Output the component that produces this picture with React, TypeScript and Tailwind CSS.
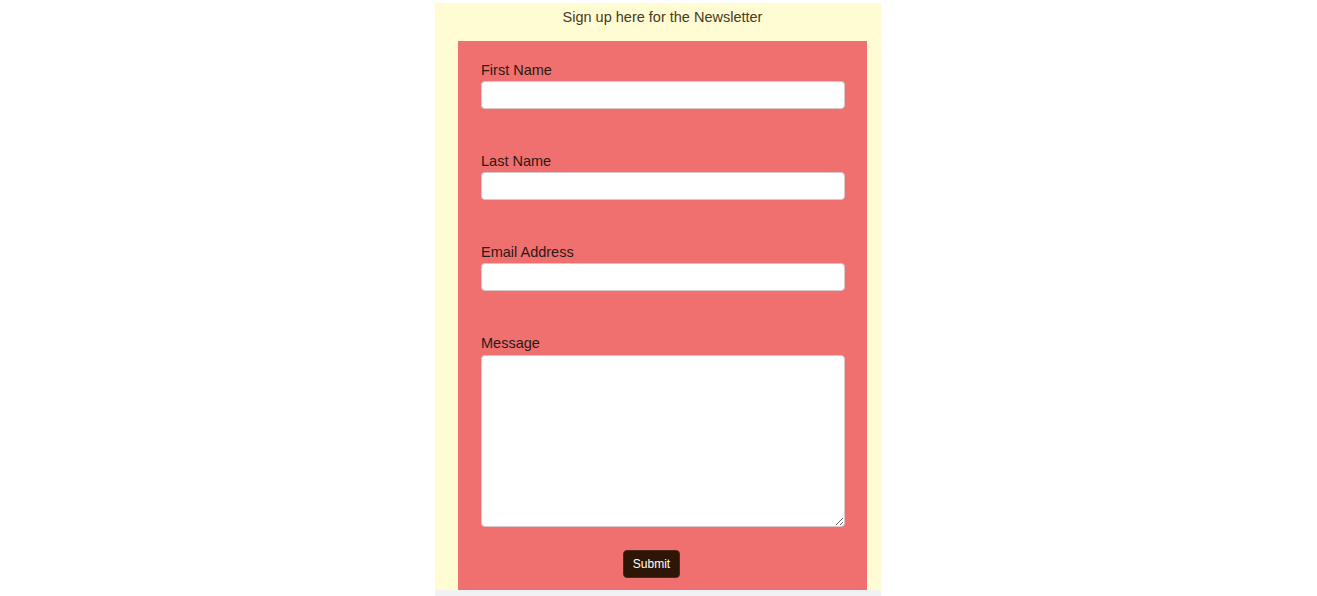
import React from 'react';

const fields = ['First Name', 'Last Name', 'Email Address'];

const App: React.FC = () => {
  return (
    <div className="min-h-[596px] bg-white font-['Liberation_Sans',Arial,sans-serif]">
      <div className="ml-[435px] w-[446px] pt-[3px]">
        <div className="bg-[#fffbd3]">
          <h1 className="h-[38px] flex items-center justify-center pb-[9px] pl-[9px] text-[14.5px] font-normal text-[#4a3a1c]">
            Sign up here for the Newsletter
          </h1>
          <form className="ml-[23px] w-[409px] bg-[#f07070] pt-[20px] pb-[12px] px-[23px]">
            {fields.map((f) => (
              <div key={f} className="mb-[43px]">
                <label className="block text-[14.5px] leading-[18px] text-[#2b1a16] mb-[2px]">{f}</label>
                <input
                  type="text"
                  className="block w-[364px] h-[28px] bg-white border border-[#d8c8c8] rounded-[4px]"
                />
              </div>
            ))}
            <div>
              <label className="block text-[14.5px] leading-[18px] text-[#2b1a16] mb-[3px]">Message</label>
              <textarea className="block w-[364px] h-[172px] bg-white border border-[#d8c8c8] rounded-[4px]" />
            </div>
            <button
              type="button"
              className="mt-[23px] ml-[142px] h-[28px] w-[57px] bg-[#2d1606] text-white text-[12px] rounded-[4px] border border-[#4a2a1a]"
            >
              Submit
            </button>
          </form>
        </div>
        <div className="h-[6px] bg-[#f1f2f4]" />
      </div>
    </div>
  );
};

export default App;
